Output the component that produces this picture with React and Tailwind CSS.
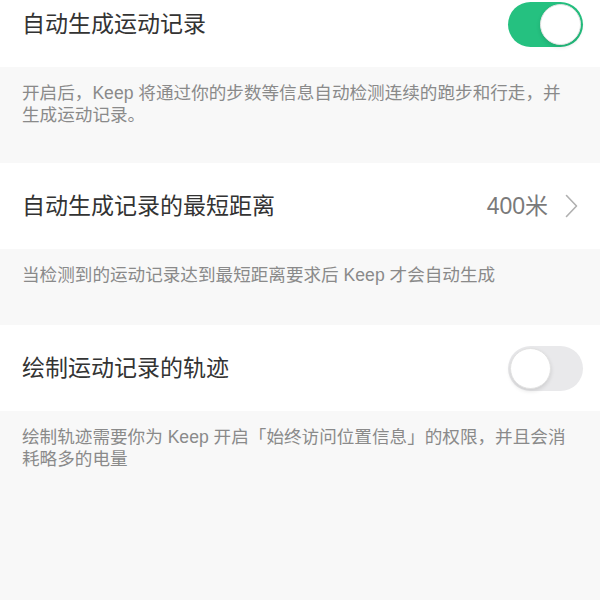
const font = {
  fontFamily: '"Liberation Sans", "Noto Sans CJK SC", sans-serif',
};

// iOS style switch
const Toggle = ({ on }) => (
  <div
    className={
      on
        ? "w-[75px] h-[45px] -mr-[5px] rounded-full bg-[#25c180] p-[2px] flex justify-end"
        : "w-[75px] h-[45px] -mr-[5px] rounded-full bg-[#e9e9eb] p-[2px] flex justify-start"
    }
  >
    <div className="w-[41px] h-[41px] rounded-full bg-white border border-[#e2e2e2] shadow-[0_2px_4px_rgba(0,0,0,0.12)]" />
  </div>
);

const Chevron = () => (
  <svg width="13" height="24" viewBox="0 0 13 24" className="text-[#b0b0b0]">
    <polyline
      points="1.5,1.5 11.5,12 1.5,22.5"
      fill="none"
      stroke="currentColor"
      strokeWidth="1.6"
      strokeLinecap="round"
      strokeLinejoin="round"
    />
  </svg>
);

const Row = ({ title, children, className = "" }) => (
  <div
    className={
      "bg-white h-[86px] px-[22px] flex items-center justify-between " +
      className
    }
  >
    <span className="text-[23px] text-[#333333]">{title}</span>
    {children}
  </div>
);

const Note = ({ children, className = "" }) => (
  <div
    className={
      "bg-[#f8f8f8] px-[22px] pt-[15px] text-[17.6px] leading-[22px] text-[#8a8a8a] whitespace-nowrap " +
      className
    }
  >
    {children}
  </div>
);

export default function App() {
  return (
    <div className="w-[600px] h-[600px] overflow-hidden bg-[#f8f8f8]" style={font}>
      <div className="-mt-[19px]">
        <Row title="自动生成运动记录">
          <Toggle on />
        </Row>
        <Note className="h-[96px]">
          开启后，Keep 将通过你的步数等信息自动检测连续的跑步和行走，并
          <br />
          生成运动记录。
        </Note>

        <Row title="自动生成记录的最短距离">
          <div className="flex items-center gap-[17px]">
            <span className="text-[23px] text-[#7a7a7a]">400米</span>
            <Chevron />
          </div>
        </Row>
        <Note className="h-[76px] pt-[13px]">
          当检测到的运动记录达到最短距离要求后 Keep 才会自动生成
        </Note>

        <Row title="绘制运动记录的轨迹">
          <Toggle />
        </Row>
        <Note>
          绘制轨迹需要你为 Keep 开启「始终访问位置信息」的权限，并且会消
          <br />
          耗略多的电量
        </Note>
      </div>
    </div>
  );
}
